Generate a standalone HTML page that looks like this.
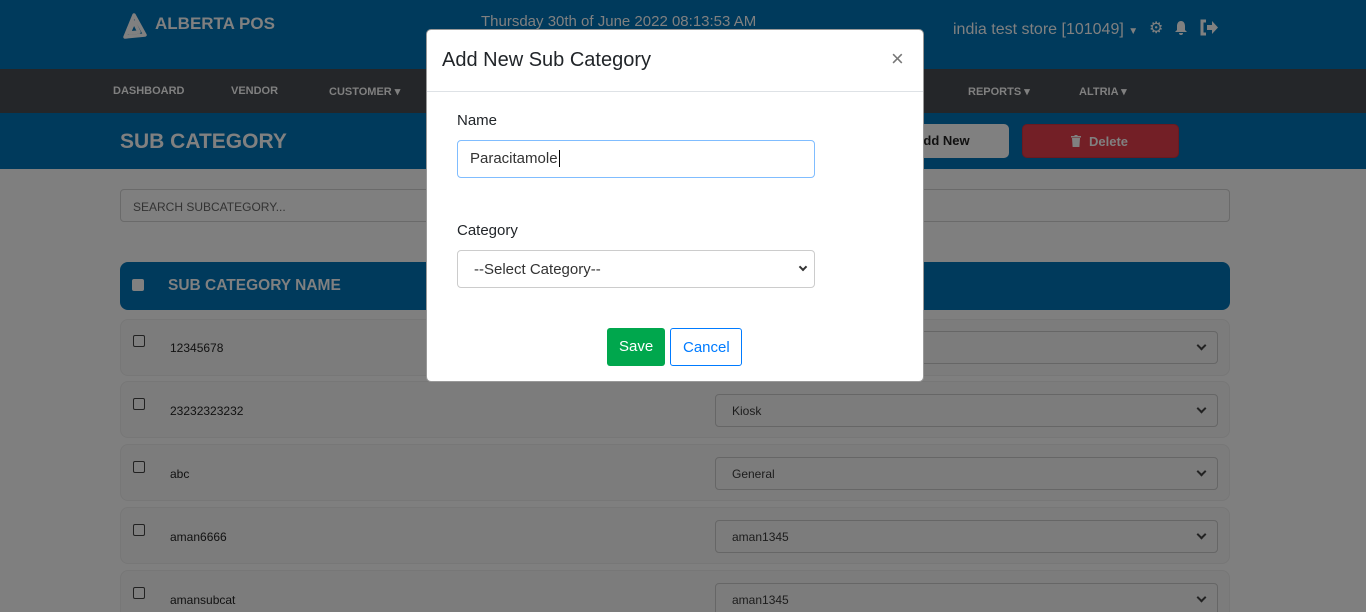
<!DOCTYPE html>
<html style="width:1366px;height:612px;overflow:hidden"><head><style>
*{box-sizing:border-box;margin:0;padding:0}
html,body{width:1366px;height:612px;overflow:hidden}
body{background:#7f7f7f;font-family:"Liberation Sans",sans-serif;position:relative}
.a{position:absolute}
.hdr{left:0;top:0;width:1366px;height:69px;background:#003a5c}
.nav{left:0;top:69px;width:1366px;height:44px;background:#242629}
.sub{left:0;top:113px;width:1366px;height:56px;background:#003a5c}
.nv{top:85px;font-size:11px;font-weight:bold;color:#808080}
.row{left:120px;width:1110px;height:57px;background:#7c7c7c;border:1px solid #777;border-radius:8px}
.cb{width:12px;height:12px;border:1px solid #222;border-radius:2px;background:#7f7f7f}
.sel{left:715px;width:503px;height:33px;border:1px solid #666;border-radius:4px;font-size:12px;color:#1c1c1c;padding:9px 16px}
.sel:after{content:"";position:absolute;right:12px;top:10px;width:5px;height:5px;border-right:2px solid #222;border-bottom:2px solid #222;transform:rotate(45deg)}
.rt{left:170px;font-size:12px;color:#111}
</style></head><body>
<div class="a hdr"></div>
<svg class="a" style="left:121px;top:13px" width="26" height="26" viewBox="0 0 26 26"><path d="M13 2 L24 22 L4 24 Z M13 9 L18 19 L8 20 Z" fill="none" stroke="#808080" stroke-width="3.5" stroke-linejoin="round"/></svg>
<div class="a" style="left:155px;top:14px;font-size:17px;font-weight:bold;color:#808080">ALBERTA POS</div>
<div class="a" style="left:481px;top:13px;font-size:15px;color:#808080">Thursday 30th of June 2022 08:13:53 AM</div>
<div class="a" style="left:953px;top:21px;font-size:16px;color:#808080">india test store [101049] <span style="font-size:10px">▼</span></div>
<div class="a" style="left:1149px;top:18px;font-size:16px;color:#808080">⚙</div>
<svg class="a" style="left:1173px;top:20px" width="16" height="16" viewBox="0 0 16 16"><path d="M8 1C5 1 4 4 4 6v4l-2 2h12l-2-2V6c0-2-1-5-4-5zM6 13a2 2 0 004 0z" fill="#808080"/></svg>
<svg class="a" style="left:1199px;top:19px" width="20" height="17" viewBox="0 0 20 17"><path d="M7 2H3v13h4" fill="none" stroke="#808080" stroke-width="3"/><path d="M8 6h5V2l6 6.5-6 6.5v-4H8z" fill="#808080"/></svg>
<div class="a nav"></div>
<div class="a nv" style="left:113px">DASHBOARD</div>
<div class="a nv" style="left:231px">VENDOR</div>
<div class="a nv" style="left:329px">CUSTOMER ▾</div>
<div class="a nv" style="left:968px">REPORTS ▾</div>
<div class="a nv" style="left:1079px">ALTRIA ▾</div>
<div class="a sub"></div>
<div class="a" style="left:120px;top:130px;font-size:21px;font-weight:bold;color:#808080">SUB CATEGORY</div>
<div class="a" style="left:880px;top:124px;width:129px;height:34px;background:#808080;border-radius:5px;font-size:13px;font-weight:bold;color:#111;padding:9px 0 0 34px">Add New</div>
<div class="a" style="left:1022px;top:124px;width:157px;height:34px;background:#731f26;border:1px solid #6a1a20;border-radius:5px;font-size:13px;font-weight:bold;color:#808080;padding:9px 0 0 66px">Delete</div>
<svg class="a" style="left:1071px;top:135px" width="10" height="12" viewBox="0 0 10 12"><path d="M0 1h10v1.5H0zM3.5 0h3v1H3.5zM1 3h8l-.6 9H1.6z" fill="#808080"/></svg>
<div class="a" style="left:120px;top:189px;width:1110px;height:33px;border:1px solid #6a6a6a;border-radius:4px;font-size:12px;color:#333;padding:10px 12px">SEARCH SUBCATEGORY...</div>
<div class="a" style="left:120px;top:262px;width:1110px;height:48px;background:#003a5c;border-radius:8px"></div>
<div class="a" style="left:132px;top:279px;width:12px;height:12px;background:#808080;border-radius:2px"></div>
<div class="a" style="left:168px;top:277px;font-size:15.5px;font-weight:bold;color:#808080">SUB CATEGORY NAME</div>
<div class="a row" style="top:319px"></div><div class="a cb" style="left:133px;top:335px"></div><div class="a rt" style="top:341px">12345678</div><div class="a sel" style="top:331px"></div>
<div class="a row" style="top:381px"></div><div class="a cb" style="left:133px;top:398px"></div><div class="a rt" style="top:404px">23232323232</div><div class="a sel" style="top:394px">Kiosk</div>
<div class="a row" style="top:444px"></div><div class="a cb" style="left:133px;top:461px"></div><div class="a rt" style="top:467px">abc</div><div class="a sel" style="top:457px">General</div>
<div class="a row" style="top:507px"></div><div class="a cb" style="left:133px;top:524px"></div><div class="a rt" style="top:530px">aman6666</div><div class="a sel" style="top:520px">aman1345</div>
<div class="a row" style="top:570px"></div><div class="a cb" style="left:133px;top:587px"></div><div class="a rt" style="top:593px">amansubcat</div><div class="a sel" style="top:583px">aman1345</div>

<div class="a" style="left:426px;top:29px;width:498px;height:353px;background:#fff;border-radius:5px;border:1px solid #999"></div>
<div class="a" style="left:442px;top:49px;font-size:20px;color:#212529">Add New Sub Category</div>
<div class="a" style="left:891px;top:46px;font-size:22px;color:#777">×</div>
<div class="a" style="left:427px;top:91px;width:496px;height:1px;background:#dee2e6"></div>
<div class="a" style="left:457px;top:112px;font-size:15px;color:#212529">Name</div>
<div class="a" style="left:457px;top:140px;width:358px;height:38px;border:1px solid #80bdff;border-radius:4px;font-size:15px;color:#333;padding:9px 12px">Paracitamole<span style="border-left:1px solid #000;margin-left:1px"></span></div>
<div class="a" style="left:457px;top:222px;font-size:15px;color:#212529">Category</div>
<div class="a" style="left:457px;top:250px;width:358px;height:38px;border:1px solid #ccc;border-radius:4px;font-size:15px;color:#333;padding:10px 16px">--Select Category--</div>
<div class="a" style="left:800px;top:264px;width:6px;height:6px;border-right:2px solid #333;border-bottom:2px solid #333;transform:rotate(45deg)"></div>
<div class="a" style="left:607px;top:328px;width:58px;height:38px;background:#00a74d;border-radius:3px;color:#fff;font-size:15px;padding:10px 0 0 12px">Save</div>
<div class="a" style="left:670px;top:328px;width:72px;height:38px;border:1px solid #007bff;border-radius:3px;color:#007bff;font-size:15px;padding:10px 0 0 12px">Cancel</div>
</body></html>
